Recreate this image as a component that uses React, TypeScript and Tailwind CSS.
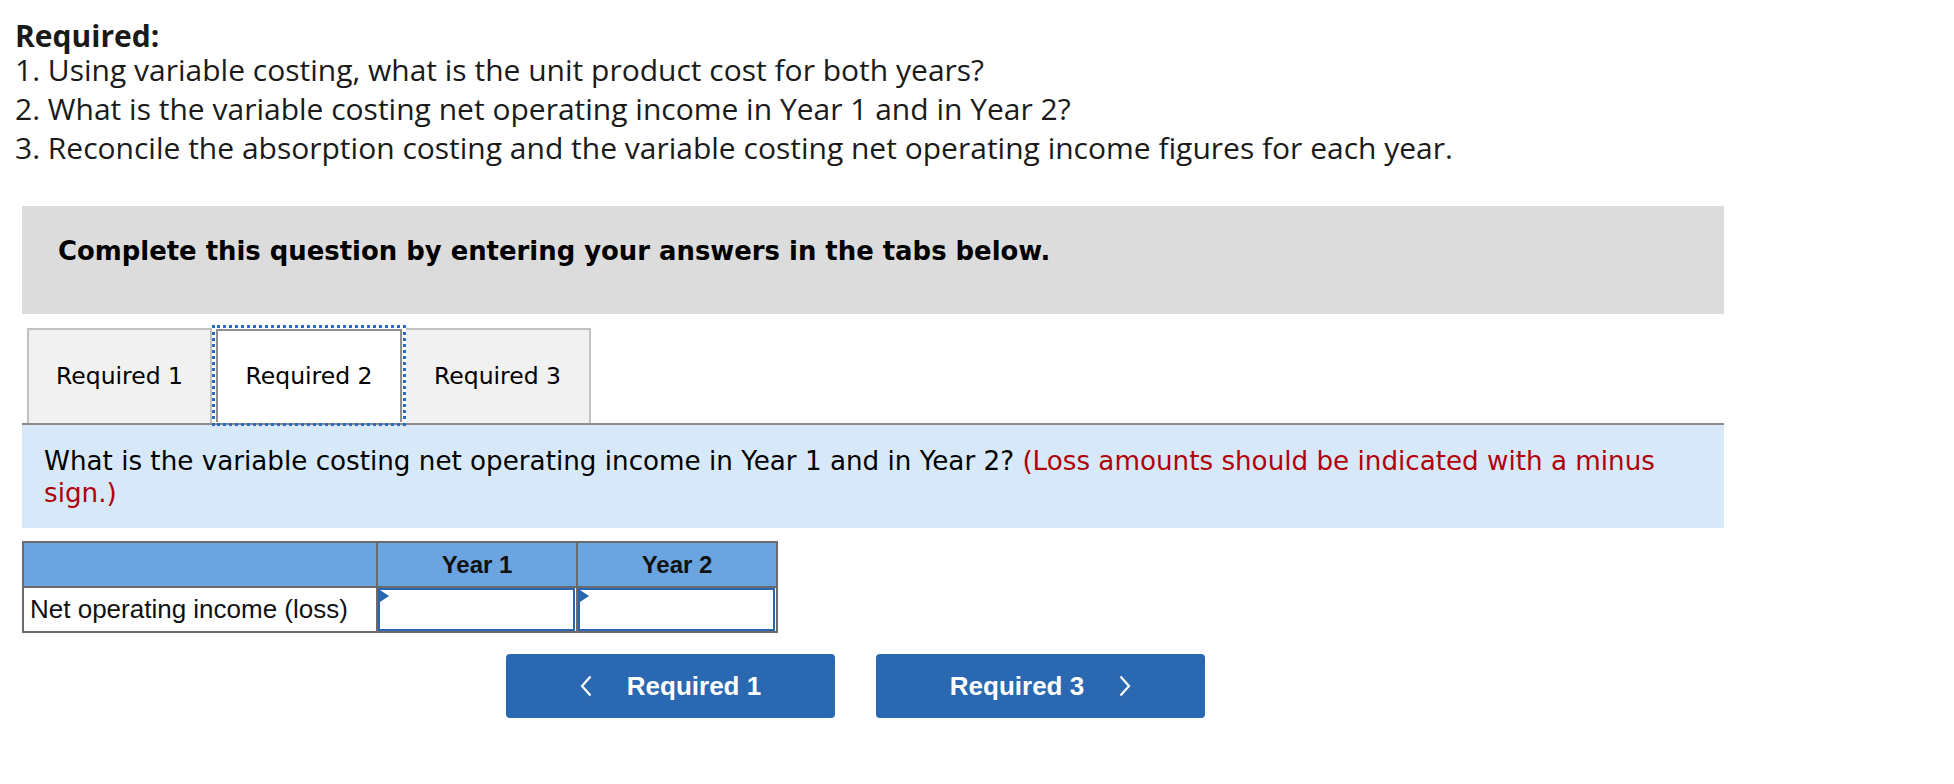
// Variable costing question — tabbed answer panel (Required 2 active)

const verdana = "font-['DejaVu_Sans',Verdana,sans-serif]"
const arial = "font-['Liberation_Sans',Arial,sans-serif]"

function InputCell() {
  return (
    <div className="relative h-full w-full pr-[1px]">
      <div className="h-full w-full border-2 border-[#2966b1] bg-white" />
      <svg
        className="absolute left-[2px] top-[2px]"
        width="9"
        height="12"
        viewBox="0 0 9 12"
      >
        <polygon points="0,0 9,6 0,12" fill="#2966b1" />
      </svg>
    </div>
  )
}

function ChevronLeft() {
  return (
    <svg width="12" height="22" viewBox="0 0 12 22" fill="none">
      <path d="M10.5 1.5 L2 11 L10.5 20.5" stroke="white" strokeWidth="2.2" />
    </svg>
  )
}

function ChevronRight() {
  return (
    <svg width="12" height="22" viewBox="0 0 12 22" fill="none">
      <path d="M1.5 1.5 L10 11 L1.5 20.5" stroke="white" strokeWidth="2.2" />
    </svg>
  )
}

export default function App() {
  return (
    <div className="h-[784px] w-[1954px] bg-white text-black">
      {/* Question text */}
      <div className="h-[206px] pl-[15px] pt-[21px] font-['Open_Sans',sans-serif] text-[30px] text-[#1a1a1a]">
        <div className="font-bold leading-[29px]">Required:</div>
        <div className="leading-[39px]">
          <div>1. Using variable costing, what is the unit product cost for both years?</div>
          <div>2. What is the variable costing net operating income in Year 1 and in Year 2?</div>
          <div>3. Reconcile the absorption costing and the variable costing net operating income figures for each year.</div>
        </div>
      </div>

      {/* Instruction banner */}
      <div className="ml-[22px] h-[108px] w-[1702px] bg-[#dcdcdc] pl-[36px] pt-[30px]">
        <p className={`${verdana} text-[25.9px] font-bold leading-[30px]`}>
          Complete this question by entering your answers in the tabs below.
        </p>
      </div>

      {/* Tabs */}
      <div
        className={`${verdana} ml-[22px] mt-[14px] flex h-[97px] w-[1702px] border-b-2 border-[#8c8c8c] pl-[5px] text-[23.5px]`}
      >
        <div className="flex h-[95px] w-[185px] items-center justify-center border-2 border-b-0 border-[#c2c2c2] bg-[#f1f1f1]">
          Required 1
        </div>
        <div className="mx-[4px] mt-[1px] flex h-[93px] w-[186px] items-center justify-center border-2 border-b-0 border-[#8f8f8f] bg-white outline-[3px] outline-offset-1 outline-dotted outline-[#2a6bc0]">
          Required 2
        </div>
        <div className="flex h-[95px] w-[185px] items-center justify-center border-2 border-b-0 border-l-0 border-[#c2c2c2] bg-[#f1f1f1]">
          Required 3
        </div>
      </div>

      {/* Question panel */}
      <div
        className={`${verdana} ml-[22px] h-[103px] w-[1702px] bg-[#d7e9f8] pl-[22px] pt-[20px] text-[26.2px] leading-[32px]`}
      >
        What is the variable costing net operating income in Year 1 and in Year 2?{' '}
        <span className="text-[#b0000a]">
          (Loss amounts should be indicated with a minus
          <br />
          sign.)
        </span>
      </div>

      {/* Answer table */}
      <div className={`${arial} ml-[22px] mt-[13px] w-[756px] border-2 border-[#6b6b6b] text-[#111]`}>
        <div className="flex h-[43px] bg-[#6aa4e1] text-[24px] font-bold">
          <div className="w-[354px] border-r-2 border-[#6b6b6b]" />
          <div className="flex w-[200px] items-center justify-center border-r-2 border-[#6b6b6b]">
            Year 1
          </div>
          <div className="flex flex-1 items-center justify-center">Year 2</div>
        </div>
        <div className="flex h-[45px] border-t-2 border-[#6b6b6b] text-[26px]">
          <div className="flex w-[354px] items-center border-r-2 border-[#6b6b6b] pl-[6px]">
            Net operating income (loss)
          </div>
          <div className="w-[200px] border-r-2 border-[#6b6b6b]">
            <InputCell />
          </div>
          <div className="flex-1">
            <InputCell />
          </div>
        </div>
      </div>

      {/* Navigation buttons */}
      <div className={`${arial} ml-[506px] mt-[21px] flex gap-[41px] text-[26px] font-bold text-white`}>
        <button className="flex h-[64px] w-[329px] items-center justify-center gap-[35px] rounded-[4px] bg-[#2a68b1]">
          <ChevronLeft />
          <span>Required 1</span>
        </button>
        <button className="flex h-[64px] w-[329px] items-center justify-center gap-[35px] rounded-[4px] bg-[#2a68b1]">
          <span>Required 3</span>
          <ChevronRight />
        </button>
      </div>
    </div>
  )
}
